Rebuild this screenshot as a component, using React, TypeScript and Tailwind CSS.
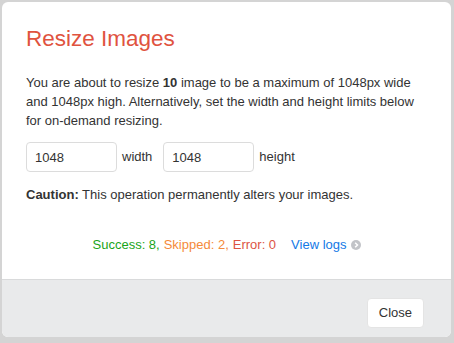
import React, { useState } from "react";

const App: React.FC = () => {
  const [width, setWidth] = useState("1048");
  const [height, setHeight] = useState("1048");

  return (
    <div
      className="w-[454px] h-[343px] bg-[#d4d4d4] pt-[2px] pl-[2px] pr-[3px] pb-[6px]"
      style={{ fontFamily: '"Liberation Sans", Arial, sans-serif' }}
    >
      <div className="h-full flex flex-col bg-white rounded-[6px] overflow-hidden">
        {/* Body */}
        <div className="flex-1 px-6 pt-[22px]">
          <h2 className="text-[22.5px] leading-[30px] text-[#e0533f] font-normal">
            Resize Images
          </h2>
          <p className="mt-[19px] text-[13px] leading-[19px] text-[#333]">
            You are about to resize <b>10</b> image to be a maximum of 1048px
            wide and 1048px high. Alternatively, set the width and height limits
            below for on-demand resizing.
          </p>
          <div className="mt-[12px] flex items-center text-[13px] text-[#333]">
            <input
              value={width}
              onChange={(e) => setWidth(e.target.value)}
              className="w-[91px] h-[30px] border border-[#dcdcdc] rounded-[4px] px-[8px] text-[13px] text-[#333] outline-none"
            />
            <span className="ml-[5px] mr-[11px]">width</span>
            <input
              value={height}
              onChange={(e) => setHeight(e.target.value)}
              className="w-[91px] h-[30px] border border-[#dcdcdc] rounded-[4px] px-[8px] text-[13px] text-[#333] outline-none"
            />
            <span className="ml-[5px]">height</span>
          </div>
          <p className="mt-[13px] text-[13px] leading-[19px] text-[#333]">
            <b>Caution:</b> This operation permanently alters your images.
          </p>
          <div className="mt-[31px] flex justify-center items-center text-[13px] leading-[19px]">
            <span className="text-[#1aa51a]">Success: 8,</span>
            <span className="ml-[4px] text-[#f58a3a]">Skipped: 2,</span>
            <span className="ml-[4px] text-[#dc5444]">Error: 0</span>
            <a href="#" className="ml-[15px] text-[#1479e6] flex items-center">
              View logs
              <svg width="10" height="10" viewBox="0 0 12 12" className="ml-[4px]">
                <circle cx="6" cy="6" r="6" fill="#c2c4c8" />
                <path d="M5 3.2 L7.8 6 L5 8.8" stroke="#fff" strokeWidth="1.8" fill="none" />
              </svg>
            </a>
          </div>
        </div>
        {/* Footer */}
        <div className="h-[58px] bg-[#e9eaeb] border-t border-[#d9dadb] flex items-start justify-end pt-[18px] pr-[27px]">
          <button className="h-[30px] px-[11px] bg-white rounded-[4px] border border-[#e4e4e4] text-[13px] text-[#333]">
            Close
          </button>
        </div>
      </div>
    </div>
  );
};

export default App;
